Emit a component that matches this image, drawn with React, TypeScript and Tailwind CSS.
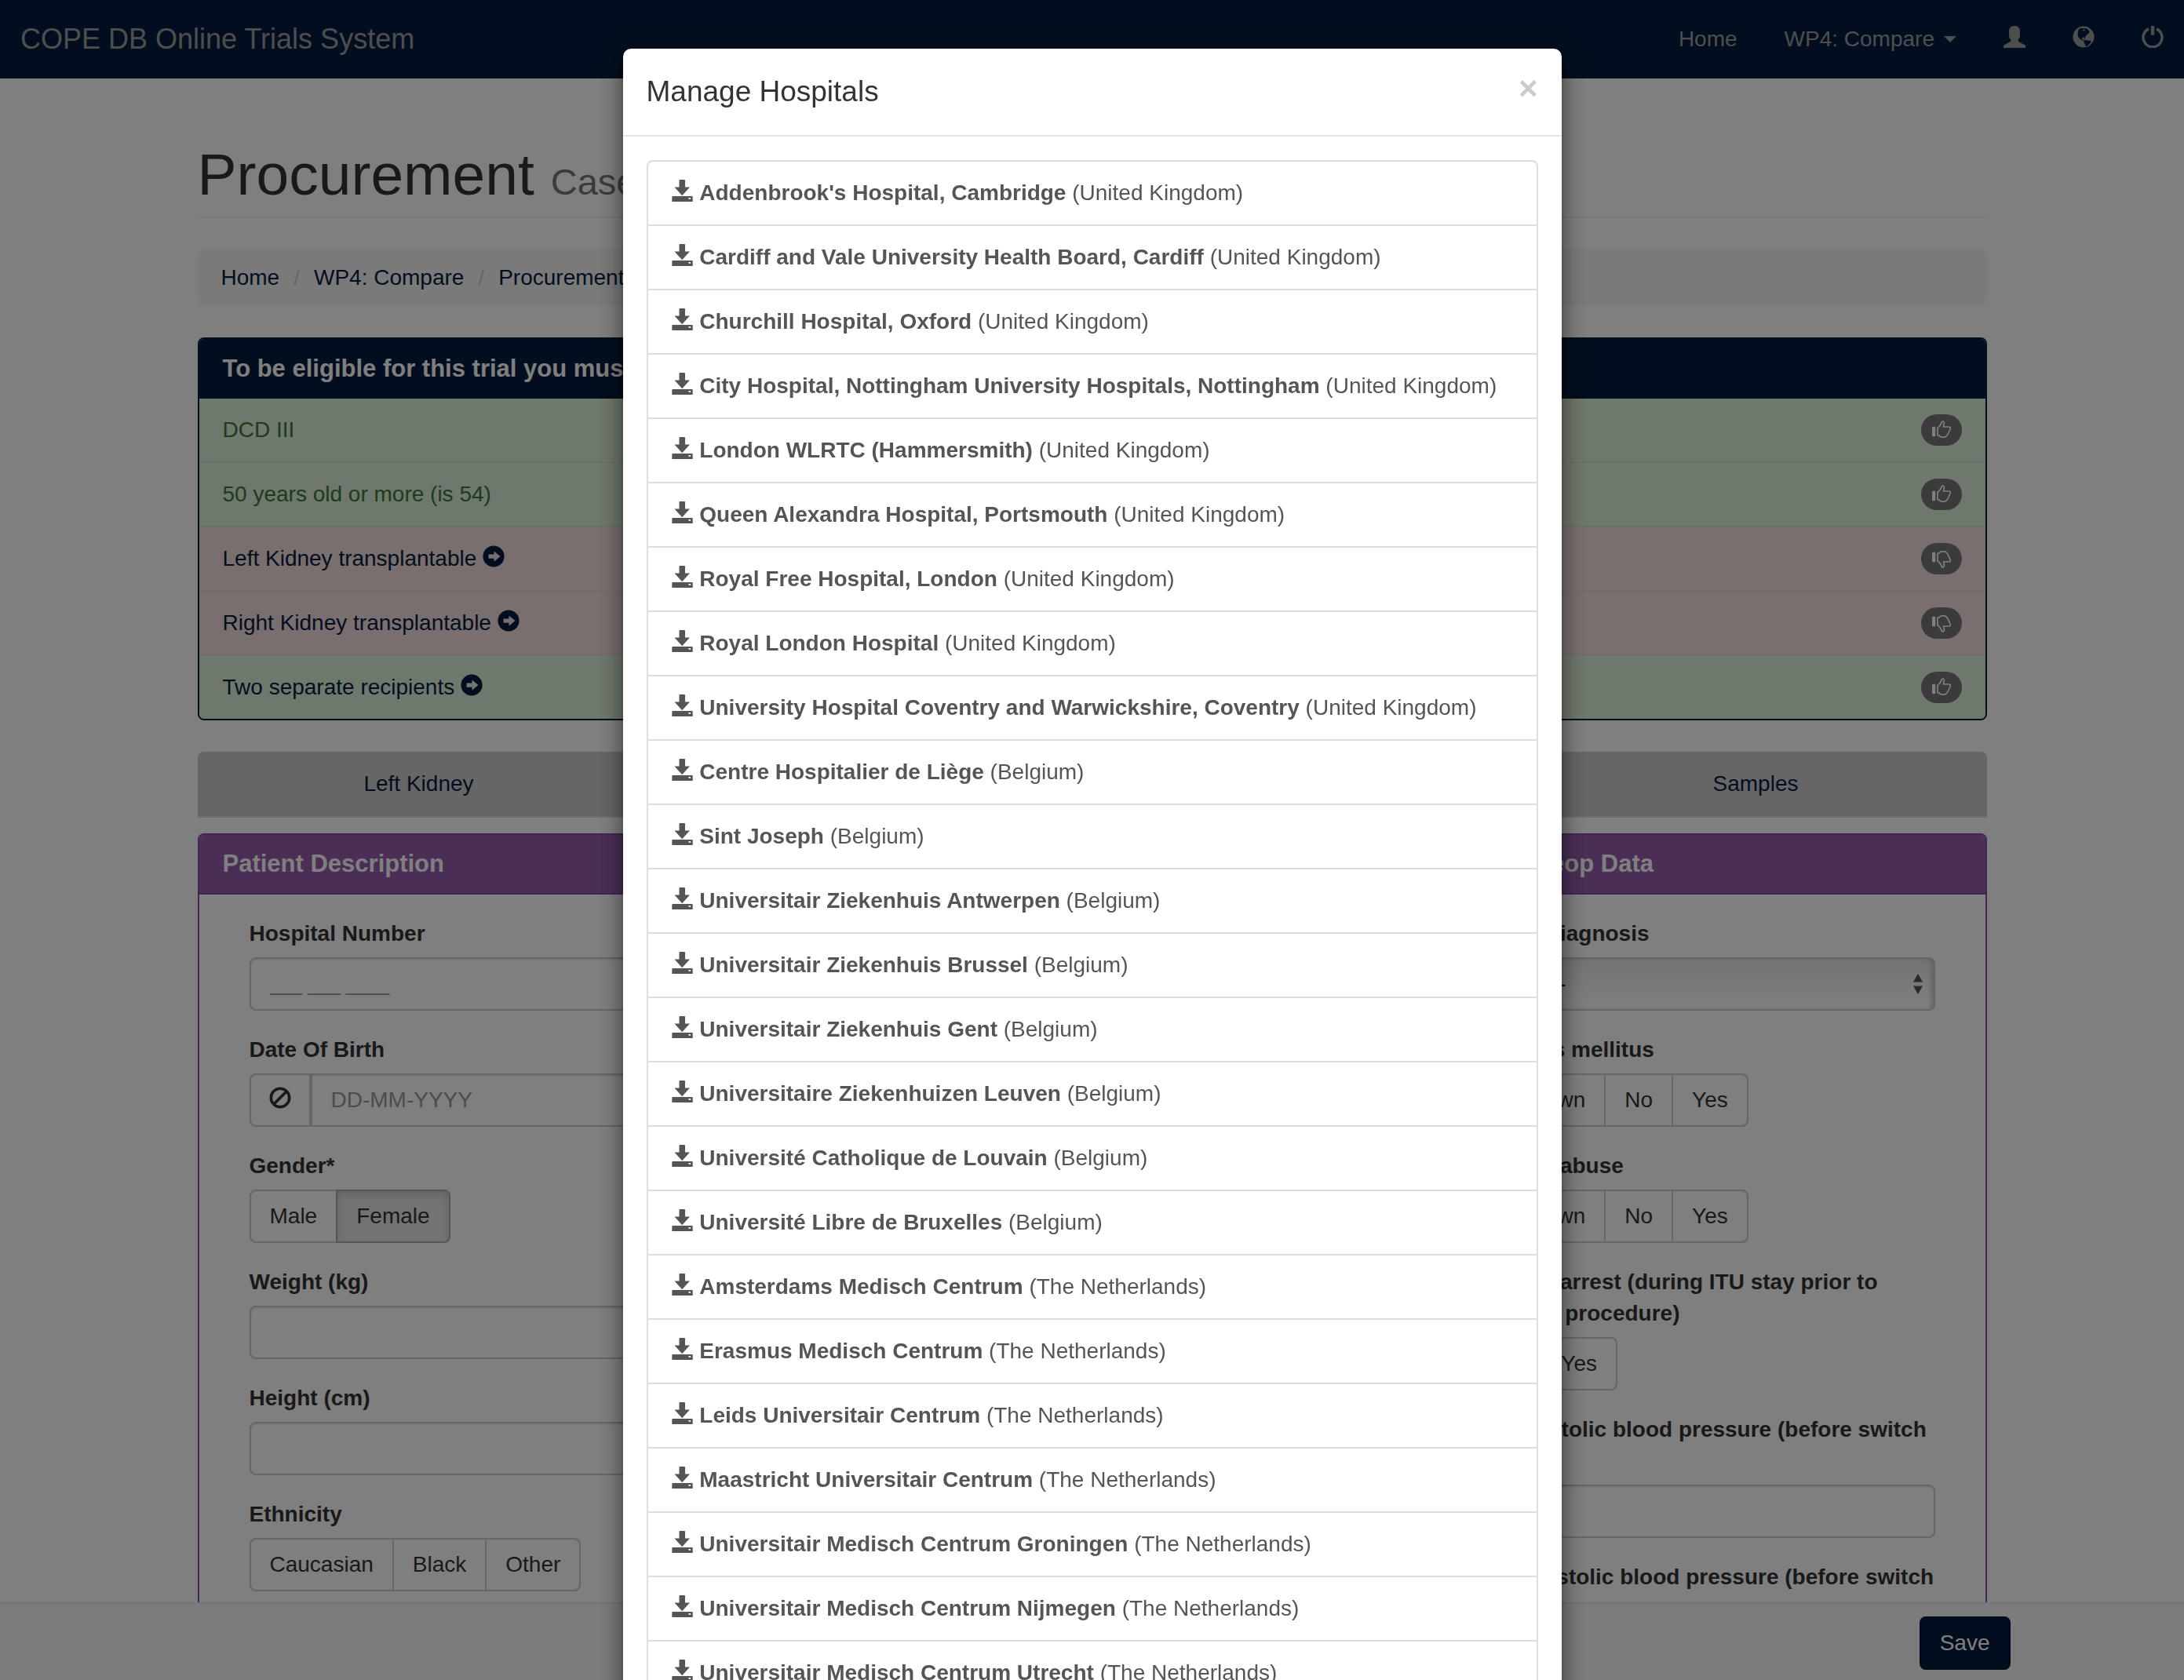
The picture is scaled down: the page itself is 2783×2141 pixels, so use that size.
import React from "react";

type IconProps = { className?: string };

function Icon({ className = "", children }: IconProps & { children: React.ReactNode }) {
  return (
    <svg viewBox="0 0 28 28" fill="currentColor" aria-hidden="true" className={`inline-block size-7 align-[-2px] ${className}`}>
      {children}
    </svg>
  );
}

const SaveIcon = () => (
  <Icon>
    <path
      fillRule="evenodd"
      d="M10.500 0h5.500a1 1 0 0 1 1 1v8.500h6L13.200 20.300 3.500 9.500h6V1a1 1 0 0 1 1-1zM1.300 21h24.400a1 1 0 0 1 1 1v6H.300v-6a1 1 0 0 1 1-1zM21.500 23v1.800h2.600V23z"
    />
  </Icon>
);

const UserIcon = () => (
  <Icon>
    <path d="M14 0c4.200 0 7 2.600 7 7v4.500c0 3-1 5-2.500 6.500 0 1 .3 1.600 1.300 2.200l8.200 4.600V28H0v-3.200l8.200-4.600c1-.6 1.300-1.200 1.300-2.200C8 16.500 7 14.500 7 11.500V7c0-4.400 2.800-7 7-7z" />
  </Icon>
);

const GlobeIcon = () => (
  <Icon>
    <path
      fillRule="evenodd"
      d="M14 .5a13.500 13.500 0 1 1 0 27 13.500 13.500 0 0 1 0-27zM8 4L7 7.500 6.500 11l1 3.500 2.500 2.500 2.500 1.200 1.500 1 .8-.8-1.800-1.200-1.200-1.500.8-1.300 1.800.3.800 2 .7-.2.100-2.300 1.800-2.700 2.500-1.800 1.500-2.200-1.200-1.500L19.500 4.500 17 3l-2.500.5L12 2.800zM13 5.200l1.800-.5 1.400.8-1.400 1-1.600-.3zM14.500 18.800l1.500-.8 3.500.6 4 .6-.3 2-3 3.200-3 2-1-.8-.2-2.600-1.500-1.600z"
    />
  </Icon>
);

const PowerIcon = () => (
  <Icon>
    <rect x="11.800" y="0" width="4.400" height="11.800" rx="1" />
    <path d="M9 3.900a12 12 0 1 0 10 0" fill="none" stroke="currentColor" strokeWidth="3.400" />
  </Icon>
);

const ArrowCircleIcon = () => (
  <Icon>
    <path
      fillRule="evenodd"
      d="M14 .4a13.600 13.600 0 1 1 0 27.200A13.600 13.600 0 0 1 14 .4zM14.500 7.500v4H7.500v5.200h7v4L22.500 14.100z"
    />
  </Icon>
);

const BanIcon = () => (
  <Icon>
    <circle cx="14" cy="14" r="11.700" fill="none" stroke="currentColor" strokeWidth="3.600" />
    <path d="M6 22L22 6" stroke="currentColor" strokeWidth="3.800" />
  </Icon>
);

function Thumb({ up }: { up: boolean }) {
  return (
    <span className="flex h-10 w-[52px] items-center justify-center rounded-full bg-[#777] text-white">
      <svg viewBox="0 0 24 24" role="img" aria-label={up ? "Met" : "Not met"} className={up ? "size-6" : "size-6 -scale-y-100"}>
        <rect x="0" y="7.800" width="4.200" height="12.400" rx="0.800" fill="currentColor" />
        <path
          d="M7 9.200C9.500 7.500 11 5.500 12 2.600c.5-1.500 1.500-1.700 2.300-1.400 1.200.5 1.200 2 .9 3.500l-.7 3.300h7c1.800 0 2.200 1.300 1.500 3l-3 6.500c-.7 1.500-1.200 1.700-2.200 2.700-.5.700-1 .9-2 .9h-3.200c-1.300 0-2.200-.6-3-1.400C8.600 19 8 18.600 7 18.600z"
          fill="none"
          stroke="currentColor"
          strokeWidth="1.700"
          strokeLinejoin="round"
        />
      </svg>
    </span>
  );
}

const criteria = [
  { text: "DCD III", ok: true, link: false },
  { text: "50 years old or more (is 54)", ok: true, link: false },
  { text: "Left Kidney transplantable", ok: false, link: true },
  { text: "Right Kidney transplantable", ok: false, link: true },
  { text: "Two separate recipients", ok: true, link: true },
];

const hospitals: [string, string][] = [
  ["Addenbrook's Hospital, Cambridge", "United Kingdom"],
  ["Cardiff and Vale University Health Board, Cardiff", "United Kingdom"],
  ["Churchill Hospital, Oxford", "United Kingdom"],
  ["City Hospital, Nottingham University Hospitals, Nottingham", "United Kingdom"],
  ["London WLRTC (Hammersmith)", "United Kingdom"],
  ["Queen Alexandra Hospital, Portsmouth", "United Kingdom"],
  ["Royal Free Hospital, London", "United Kingdom"],
  ["Royal London Hospital", "United Kingdom"],
  ["University Hospital Coventry and Warwickshire, Coventry", "United Kingdom"],
  ["Centre Hospitalier de Liège", "Belgium"],
  ["Sint Joseph", "Belgium"],
  ["Universitair Ziekenhuis Antwerpen", "Belgium"],
  ["Universitair Ziekenhuis Brussel", "Belgium"],
  ["Universitair Ziekenhuis Gent", "Belgium"],
  ["Universitaire Ziekenhuizen Leuven", "Belgium"],
  ["Université Catholique de Louvain", "Belgium"],
  ["Université Libre de Bruxelles", "Belgium"],
  ["Amsterdams Medisch Centrum", "The Netherlands"],
  ["Erasmus Medisch Centrum", "The Netherlands"],
  ["Leids Universitair Centrum", "The Netherlands"],
  ["Maastricht Universitair Centrum", "The Netherlands"],
  ["Universitair Medisch Centrum Groningen", "The Netherlands"],
  ["Universitair Medisch Centrum Nijmegen", "The Netherlands"],
  ["Universitair Medisch Centrum Utrecht", "The Netherlands"],
];

const inputClass =
  "block h-[68px] w-full rounded-lg border-2 border-[#ccc] bg-white px-6 text-[28px] text-[#555] shadow-[inset_0_2px_2px_rgba(0,0,0,0.075)] placeholder:text-[#999]";

function TextField({ id, label, placeholder, small }: { id: string; label: React.ReactNode; placeholder?: string; small?: boolean }) {
  return (
    <div className="mb-[30px]">
      <label htmlFor={id} className="mb-2.5 block whitespace-nowrap font-bold">
        {label}
      </label>
      <input id={id} type="text" placeholder={placeholder} className={small ? `${inputClass} placeholder:text-[25px]` : inputClass} />
    </div>
  );
}

function ButtonGroup({ label, options, active }: { label: React.ReactNode; options: string[]; active?: string }) {
  return (
    <div className="mb-[30px]" role="group">
      <div className="mb-2.5 whitespace-nowrap font-bold">{label}</div>
      <div className="flex">
        {options.map((o) => (
          <button
            key={o}
            type="button"
            aria-pressed={o === active}
            className={
              o === active
                ? "relative -ml-0.5 h-[68px] border-2 border-[#adadad] bg-[#e6e6e6] px-6 shadow-[inset_0_6px_10px_rgba(0,0,0,0.125)] first:ml-0 first:rounded-l-lg last:rounded-r-lg"
                : "-ml-0.5 h-[68px] border-2 border-[#ccc] bg-white px-6 first:ml-0 first:rounded-l-lg last:rounded-r-lg"
            }
          >
            {o}
          </button>
        ))}
      </div>
    </div>
  );
}

function Panel({ title, children }: { title: string; children?: React.ReactNode }) {
  return (
    <section className="rounded-lg border-2 border-[#8a46a8] bg-white">
      <h2 className="flex h-[76px] items-center rounded-t-md border-b-2 border-[#8a46a8] bg-[#945dac] px-[30px] text-[31px] font-bold text-white">
        {title}
      </h2>
      <div className="px-16 py-[30px]">{children}</div>
    </section>
  );
}

export default function App() {
  return (
    <div className="relative h-screen overflow-hidden bg-white font-['Liberation_Sans',Arial,sans-serif] text-[28px] leading-10 text-[#333]">
      <header className="fixed inset-x-0 top-0 z-10 flex h-[100px] items-center justify-between bg-[#051d3e] px-[26px] text-[#9d9d9d]">
        <a href="#" className="text-[36px]">
          COPE DB Online Trials System
        </a>
        <nav className="flex items-center gap-[60px]">
          <a href="#">Home</a>
          <button type="button" className="flex items-center gap-3">
            WP4: Compare
            <svg viewBox="0 0 16 8" fill="currentColor" className="h-2 w-4" aria-hidden="true">
              <path d="M0 0h16L8 8z" />
            </svg>
          </button>
          <a href="#" aria-label="Profile"><UserIcon /></a>
          <a href="#" aria-label="Language"><GlobeIcon /></a>
          <a href="#" aria-label="Log out"><PowerIcon /></a>
        </nav>
      </header>

      <main className="mx-auto w-full max-w-[2280px] pt-[182px]">
        <h1 className="mb-10 border-b-2 border-[#eee] pb-3.5 text-[75px] leading-[80px] font-medium">
          Procurement <small className="text-[47px] leading-none font-normal text-[#777]">Case</small>
        </h1>

        <nav aria-label="Breadcrumb" className="mb-10 rounded-lg bg-[#f5f5f5] px-[30px] py-4">
          <ol className="flex text-[#051d3e]">
            <li><a href="#">Home</a></li>
            <li aria-hidden="true" className="px-[18px] text-[#ccc]">/</li>
            <li><a href="#">WP4: Compare</a></li>
            <li aria-hidden="true" className="px-[18px] text-[#ccc]">/</li>
            <li><a href="#">Procurement</a></li>
          </ol>
        </nav>

        <section className="mb-10 overflow-hidden rounded-lg border-2 border-[#051d3e]">
          <h2 className="flex h-[76px] items-center bg-[#051d3e] px-[30px] text-[31px] font-bold text-white">
            To be eligible for this trial you must
          </h2>
          <ul className="divide-y-2 divide-[#ddd]">
            {criteria.map((c) => (
              <li
                key={c.text}
                className={
                  c.ok
                    ? "flex items-center justify-between bg-[#dff0d8] px-[30px] py-5 text-[#3c763d]"
                    : "flex items-center justify-between bg-[#f2dede] px-[30px] py-5"
                }
              >
                {c.link ? (
                  <a href="#" className="text-[#051d3e]">
                    {c.text} <ArrowCircleIcon />
                  </a>
                ) : (
                  <span>{c.text}</span>
                )}
                <Thumb up={c.ok} />
              </li>
            ))}
          </ul>
        </section>

        <div className="mb-5 grid grid-cols-[568fr_1127fr_585fr] rounded-t-lg border-b-2 border-[#ddd] bg-[#ccc] text-center text-[#051d3e]">
          <a href="#" className="py-[21px] pr-1">Left Kidney</a>
          <span />
          <a href="#" className="py-[21px] pr-1">Samples</a>
        </div>

        <div className="grid grid-cols-3 gap-[60px]">
          <Panel title="Patient Description">
            <TextField id="hospital-number" label="Hospital Number" placeholder="___ ___ ____" small />
            <div className="mb-[30px]">
              <label htmlFor="dob" className="mb-2.5 block font-bold">Date Of Birth</label>
              <div className="flex">
                <button
                  type="button"
                  aria-label="Clear date"
                  className="h-[68px] w-[78px] shrink-0 rounded-l-lg border-2 border-[#ccc] bg-white"
                >
                  <BanIcon />
                </button>
                <input
                  id="dob"
                  type="text"
                  placeholder="DD-MM-YYYY"
                  className="h-[68px] w-full rounded-r-lg border-2 border-[#ccc] bg-white px-6 shadow-[inset_0_2px_2px_rgba(0,0,0,0.075)] placeholder:text-[#999]"
                />
              </div>
            </div>
            <ButtonGroup label="Gender*" options={["Male", "Female"]} active="Female" />
            <TextField id="weight" label="Weight (kg)" />
            <TextField id="height" label="Height (cm)" />
            <ButtonGroup label="Ethnicity" options={["Caucasian", "Black", "Other"]} />
          </Panel>
          <div />
          <Panel title="Donor Preop Data">
            <div className="mb-[30px]">
              <label htmlFor="diagnosis" className="mb-2.5 block font-bold">Donor Diagnosis</label>
              <div className="relative">
                <select
                  id="diagnosis"
                  className="block h-[68px] w-full appearance-none rounded-lg border-2 border-[#ccc] bg-linear-to-b from-[#e6e6e6] to-white px-8 text-[#051d3e] shadow-[inset_-4px_0_4px_rgba(0,0,0,0.15)]"
                >
                  <option>---------</option>
                </select>
                <svg
                  viewBox="0 0 12 26"
                  fill="#555"
                  aria-hidden="true"
                  className="pointer-events-none absolute top-1/2 right-4 h-[26px] w-3 -translate-y-1/2"
                >
                  <path d="M6 0l6 10.500H0zM6 26l6-10.500H0z" />
                </svg>
              </div>
            </div>
            <ButtonGroup label="Diabetes mellitus" options={["Unknown", "No", "Yes"]} />
            <ButtonGroup label="Alcohol abuse" options={["Unknown", "No", "Yes"]} />
            <ButtonGroup
              label={<>Cardiac arrest (during ITU stay prior to<br />retrieval procedure)</>}
              options={["No", "Yes"]}
            />
            <TextField id="systolic" label={<>Last systolic blood pressure (before switch<br />off)</>} />
            <TextField id="diastolic" label={<>Last diastolic blood pressure (before switch<br />off)</>} />
          </Panel>
        </div>
      </main>

      <footer className="fixed inset-x-0 bottom-0 z-10 h-[99px] border-t-2 border-[#e7e7e7] bg-[#f8f8f8] pt-4">
        <div className="mx-auto flex w-full max-w-[2340px] justify-end">
          <button type="button" className="h-[68px] rounded-lg border-2 border-[#03142b] bg-[#051d3e] px-6 text-white">
            Save
          </button>
        </div>
      </footer>

      <div className="fixed inset-0 z-20 bg-black/50" />

      <div className="fixed inset-0 z-30 flex items-start justify-center overflow-hidden pt-[60px]">
        <div
          role="dialog"
          aria-modal="true"
          aria-labelledby="modal-title"
          className="w-full max-w-[1200px] rounded-xl border-2 border-black/20 bg-white bg-clip-padding shadow-[0_10px_30px_rgba(0,0,0,0.5)]"
        >
          <div className="flex items-start justify-between border-b-2 border-[#e5e5e5] p-[30px]">
            <h2 id="modal-title" className="text-[37px] leading-[50px] font-medium">Manage Hospitals</h2>
            <button type="button" aria-label="Close" className="text-[42px] leading-[42px] font-bold text-[#ccc]">
              ×
            </button>
          </div>
          <div className="p-[30px]">
            <ul className="divide-y-2 divide-[#ddd] rounded-lg border-2 border-[#ddd] text-[#555]">
              {hospitals.map(([name, country]) => (
                <li key={name}>
                  <a href="#" className="block px-[30px] py-5">
                    <SaveIcon /> <strong>{name}</strong> ({country})
                  </a>
                </li>
              ))}
            </ul>
          </div>
        </div>
      </div>
    </div>
  );
}
